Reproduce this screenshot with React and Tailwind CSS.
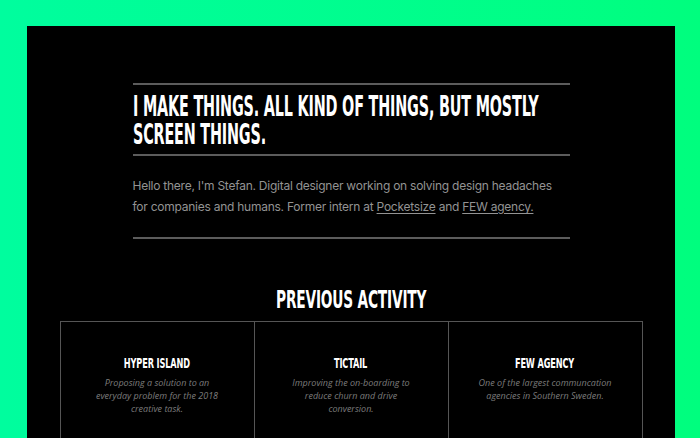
import React from 'react';

const cards = [
  {
    title: 'Hyper Island',
    text: 'Proposing a solution to an everyday problem for the 2018 creative task.',
  },
  {
    title: 'Tictail',
    text: 'Improving the on-boarding to reduce churn and drive conversion.',
  },
  {
    title: 'FEW Agency',
    text: 'One of the largest communcation agencies in Southern Sweden.',
  },
];

// condensed display face: DejaVu Sans Condensed squeezed horizontally
const display = "font-['DejaVu_Sans_Condensed','DejaVu_Sans',sans-serif] font-bold uppercase";

export default function App() {
  return (
    <div className="h-screen overflow-hidden bg-gradient-to-r from-[#00fd9e] to-[#00fe7e] pt-[26px] pl-[27px] pr-[25px]">
      <div className="h-full bg-black">
        {/* Intro */}
        <div className="mx-auto w-[437px] pt-[57px]">
          <div className="h-[2px] bg-[#5c5c5c]" />
          <h1
            className={`${display} mt-[8px] w-[760px] origin-left scale-x-[0.57] text-[28px] leading-[28px] tracking-[-0.3px] text-white`}
          >
            I make things. All kind of things, but mostly screen things.
          </h1>
          <div className="mt-[5px] h-[2px] bg-[#5c5c5c]" />
          <p className="mt-[19px] font-['Inter',sans-serif] text-[12px] leading-[21px] tracking-[-0.25px] text-[#939393]">
            Hello there, I'm Stefan. Digital designer working on solving design headaches for companies and
            humans. Former intern at <span className="underline underline-offset-2">Pocketsize</span> and{' '}
            <span className="underline underline-offset-2">FEW agency.</span>
          </p>
          <div className="mt-[20px] h-[2px] bg-[#5c5c5c]" />
        </div>

        {/* Previous activity */}
        <div className="mt-[47px] flex justify-center">
          <h2 className={`${display} scale-x-[0.61] text-[25px] leading-[28px] tracking-[-0.3px] whitespace-nowrap text-white`}>
            Previous activity
          </h2>
        </div>
        <div className="mx-auto mt-[7px] grid w-[583px] grid-cols-3 border-t border-l border-[#555]">
          {cards.map((c) => (
            <div key={c.title} className="h-[140px] border-r border-[#555] px-[27px] pt-[33px] text-center">
              <div className="flex justify-center">
                <h3 className={`${display} scale-x-[0.65] whitespace-nowrap text-[14px] leading-[16px] tracking-[-0.2px] text-white`}>
                  {c.title}
                </h3>
              </div>
              <p className="mt-[5px] font-['Open_Sans',sans-serif] text-[9px] italic leading-[13px] text-[#7c7c7c]">
                {c.text}
              </p>
            </div>
          ))}
        </div>
      </div>
    </div>
  );
}
